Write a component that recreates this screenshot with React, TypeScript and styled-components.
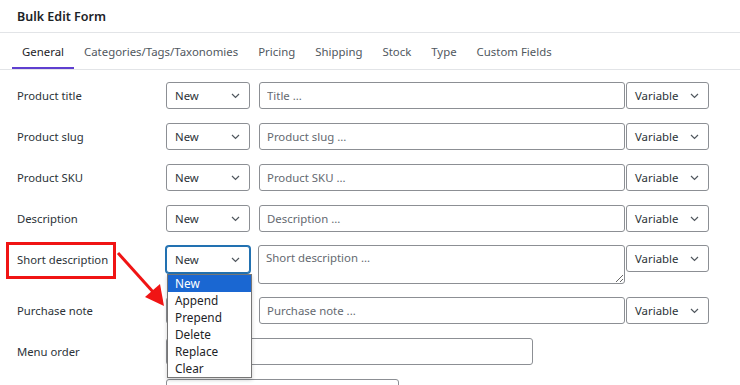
import React from "react";
import styled, { createGlobalStyle, css } from "styled-components";

const GlobalStyle = createGlobalStyle`
  html, body {
    margin: 0;
    background: #fff;
  }
  body {
    font-family: "Noto Sans", "Open Sans", Arial, sans-serif;
    color: #2c3338;
    overflow: hidden;
  }
`;

const Page = styled.div`
  position: relative;
  width: 740px;
  height: 385px;
  overflow: hidden;
`;

const Header = styled.div`
  height: 32px;
  padding: 0 17px;
  display: flex;
  align-items: center;
  border-bottom: 1px solid #e2e4e7;
  font-size: 12.5px;
  font-weight: 600;
  color: #1d2327;
`;

const Tabs = styled.nav`
  display: flex;
  padding: 0 12px;
  border-bottom: 1px solid #e2e4e7;
`;

const Tab = styled.div<{ $active?: boolean }>`
  box-sizing: border-box;
  height: 36px;
  padding: 3px 10px 0;
  display: flex;
  align-items: center;
  font-size: 11.4px;
  color: ${(p) => (p.$active ? "#1d2327" : "#50575e")};
  border-bottom: 2px solid ${(p) => (p.$active ? "#5f3fd0" : "transparent")};
`;

const Form = styled.div`
  padding: 12px 0 0 17px;
  display: flex;
  flex-direction: column;
  gap: 14px;
`;

const Row = styled.div<{ $tall?: boolean }>`
  display: flex;
  align-items: ${(p) => (p.$tall ? "flex-start" : "center")};
  min-height: 27px;
  ${(p) =>
    p.$tall &&
    css`
      margin: -1px 0;
    `}
`;

const Label = styled.div<{ $tall?: boolean }>`
  width: 149px;
  flex: none;
  font-size: 11.3px;
  color: #2c3338;
  ${(p) =>
    p.$tall &&
    css`
      height: 29px;
      display: flex;
      align-items: center;
    `}
`;

const SelectCell = styled.div`
  position: relative;
  flex: none;
`;

const Select = styled.div<{ $width: number; $focus?: boolean }>`
  box-sizing: border-box;
  width: ${(p) => p.$width}px;
  height: 27px;
  padding: 0 9px 0 8px;
  display: flex;
  align-items: center;
  justify-content: space-between;
  border: 1px solid #8c8f94;
  border-radius: 3px;
  background: #fff;
  font-size: 11.4px;
  color: #2c3338;
  ${(p) =>
    p.$focus &&
    css`
      margin-top: 1px;
      border-color: #2271b1;
      box-shadow: 0 0 0 1px #2271b1;
    `}
`;

const Input = styled.input<{ $width: number }>`
  box-sizing: border-box;
  width: ${(p) => p.$width}px;
  height: 27px;
  margin: 0;
  padding: 0 7px;
  border: 1px solid #8c8f94;
  border-radius: 3px;
  font-family: inherit;
  font-size: 11.4px;
  color: #2c3338;
  outline: none;
  &::placeholder {
    color: #646970;
  }
`;

const TextArea = styled.textarea`
  box-sizing: border-box;
  width: 367px;
  height: 39px;
  margin: 0;
  padding: 4px 7px;
  border: 1px solid #8c8f94;
  border-radius: 3px;
  font-family: inherit;
  font-size: 11.4px;
  color: #2c3338;
  outline: none;
  &::placeholder {
    color: #646970;
  }
`;

const Gap = styled.div<{ $w: number }>`
  width: ${(p) => p.$w}px;
  flex: none;
`;

const Menu = styled.ul`
  position: absolute;
  top: 29px;
  left: 1px;
  width: 83px;
  margin: 0;
  padding: 0;
  list-style: none;
  background: #fff;
  border: 1px solid #767676;
  box-shadow: 0 2px 4px rgba(0, 0, 0, 0.2);
  z-index: 5;
`;

const MenuItem = styled.li<{ $selected?: boolean }>`
  height: 17px;
  line-height: 17px;
  padding: 0 7px;
  font-size: 11.8px;
  color: ${(p) => (p.$selected ? "#fff" : "#1d2327")};
  background: ${(p) => (p.$selected ? "#1a67d2" : "transparent")};
`;

const Highlight = styled.div`
  position: absolute;
  left: 6px;
  top: 242px;
  width: 110px;
  height: 37px;
  box-sizing: border-box;
  border: 3px solid #f01414;
  pointer-events: none;
`;

const Arrow = styled.svg`
  position: absolute;
  left: 0;
  top: 0;
  pointer-events: none;
  z-index: 6;
`;

const Chevron = () => (
  <svg width="9" height="6" viewBox="0 0 9 6" fill="none">
    <path d="M1 1l3.5 3.5L8 1" stroke="#50575e" strokeWidth="1.2" />
  </svg>
);

type Field = {
  label: string;
  placeholder?: string;
  textarea?: boolean;
  open?: boolean;
};

const fields: Field[] = [
  { label: "Product title", placeholder: "Title ..." },
  { label: "Product slug", placeholder: "Product slug ..." },
  { label: "Product SKU", placeholder: "Product SKU ..." },
  { label: "Description", placeholder: "Description ..." },
  { label: "Short description", placeholder: "Short description ...", textarea: true, open: true },
  { label: "Purchase note", placeholder: "Purchase note ..." },
];

const tabs = ["General", "Categories/Tags/Taxonomies", "Pricing", "Shipping", "Stock", "Type", "Custom Fields"];
const modes = ["New", "Append", "Prepend", "Delete", "Replace", "Clear"];

const App = () => {
  return (
    <Page>
      <GlobalStyle />
      <Header>Bulk Edit Form</Header>
      <Tabs>
        {tabs.map((t, i) => (
          <Tab key={t} $active={i === 0}>
            {t}
          </Tab>
        ))}
      </Tabs>
      <Form>
        {fields.map((f) => (
          <Row key={f.label} $tall={f.textarea}>
            <Label $tall={f.textarea}>{f.label}</Label>
            <SelectCell>
              <Select $width={84} $focus={f.open}>
                New
                <Chevron />
              </Select>
              {f.open && (
                <Menu>
                  {modes.map((m, i) => (
                    <MenuItem key={m} $selected={i === 0}>
                      {m}
                    </MenuItem>
                  ))}
                </Menu>
              )}
            </SelectCell>
            <Gap $w={f.textarea ? 8 : 9} />
            {f.textarea ? <TextArea placeholder={f.placeholder} /> : <Input $width={366} placeholder={f.placeholder} />}
            <Gap $w={1} />
            <Select $width={83}>
              Variable
              <Chevron />
            </Select>
          </Row>
        ))}
        <Row>
          <Label>Menu order</Label>
          <Input $width={367} />
        </Row>
        <Row>
          <Label />
          <Input $width={233} />
        </Row>
      </Form>
      <Highlight />
      <Arrow width="740" height="385" viewBox="0 0 740 385">
        <line x1="118" y1="253" x2="154" y2="293" stroke="#f01414" strokeWidth="3" />
        <polygon points="164,306 145,297 160,284" fill="#f01414" />
      </Arrow>
    </Page>
  );
};

export default App;
